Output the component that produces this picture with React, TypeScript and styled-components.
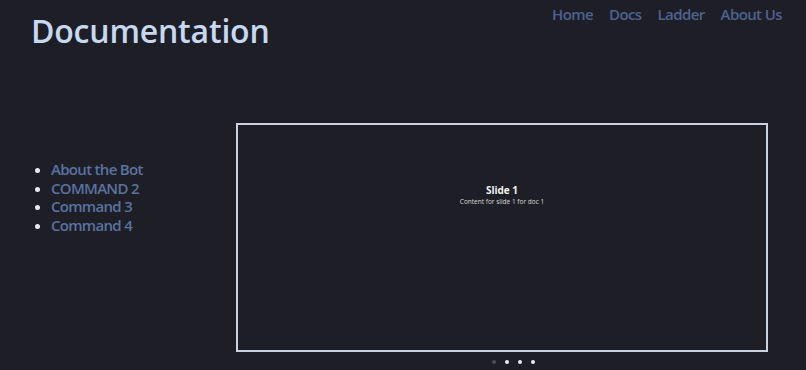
import React, { useState } from 'react'
import styled, { createGlobalStyle } from 'styled-components'

const GlobalStyle = createGlobalStyle`
  html, body {
    margin: 0;
    padding: 0;
    background: #1e1e26;
    font-family: "Open Sans", "Noto Sans", sans-serif;
  }
`

const Page = styled.div`
  width: 806px;
  height: 370px;
  overflow: hidden;
  background: #1e1e26;
`

const Header = styled.header`
  display: flex;
  justify-content: space-between;
  align-items: flex-start;
  padding: 0 24px 0 31px;
`

const Title = styled.h1`
  margin: 9px 0 0;
  font-size: 32px;
  font-weight: 600;
  color: #c7d8f2;
  letter-spacing: -0.2px;
`

const Nav = styled.nav`
  display: flex;
  gap: 16px;
  margin-top: 4px;
`

const NavLink = styled.a`
  font-size: 15px;
  font-weight: 600;
  letter-spacing: -0.6px;
  color: #4d6290;
  text-decoration: none;
`

const Main = styled.div`
  display: flex;
  margin-top: 71px;
`

const Sidebar = styled.div`
  width: 236px;
  padding-top: 37px;
`

const DocList = styled.ul`
  margin: 0;
  padding-left: 51px;
  color: #e6eaf2;
`

const DocItem = styled.li`
  font-size: 15px;
  font-weight: 600;
  letter-spacing: -0.7px;
  line-height: 18.5px;
  color: #5a72a0;
  cursor: pointer;

  &::marker {
    color: #e6eaf2;
    font-size: 13px;
  }
`

const SliderWrap = styled.div`
  display: flex;
  flex-direction: column;
  align-items: center;
`

const SlideBox = styled.div`
  width: 528px;
  height: 166px;
  border: 2px solid #c9d2de;
  display: flex;
  flex-direction: column;
  align-items: center;
  padding-top: 59px;
`

const SlideTitle = styled.div`
  font-size: 10px;
  font-weight: 700;
  color: #f2f2f2;
  line-height: 13px;
`

const SlideText = styled.div`
  font-size: 6.5px;
  color: #d8d8d8;
  line-height: 9px;
`

const Dots = styled.div`
  display: flex;
  gap: 9px;
  margin: 8px 0 0 22px;
`

const Dot = styled.button<{ $active: boolean }>`
  width: 4px;
  height: 4px;
  padding: 0;
  border: none;
  border-radius: 50%;
  background: ${p => (p.$active ? '#4a4d58' : '#e8ebf0')};
  cursor: pointer;
`

const docs = ['About the Bot', 'COMMAND 2', 'Command 3', 'Command 4']

function App() {
  const [slide, setSlide] = useState(0)

  return (
    <Page>
      <GlobalStyle />
      <Header>
        <Title>Documentation</Title>
        <Nav>
          <NavLink href="#">Home</NavLink>
          <NavLink href="#">Docs</NavLink>
          <NavLink href="#">Ladder</NavLink>
          <NavLink href="#">About Us</NavLink>
        </Nav>
      </Header>
      <Main>
        <Sidebar>
          <DocList>
            {docs.map(d => (
              <DocItem key={d}>{d}</DocItem>
            ))}
          </DocList>
        </Sidebar>
        <SliderWrap>
          <SlideBox>
            <SlideTitle>Slide {slide + 1}</SlideTitle>
            <SlideText>Content for slide {slide + 1} for doc 1</SlideText>
          </SlideBox>
          <Dots>
            {[0, 1, 2, 3].map(i => (
              <Dot key={i} $active={i === slide} onClick={() => setSlide(i)} />
            ))}
          </Dots>
        </SliderWrap>
      </Main>
    </Page>
  )
}

export default App
